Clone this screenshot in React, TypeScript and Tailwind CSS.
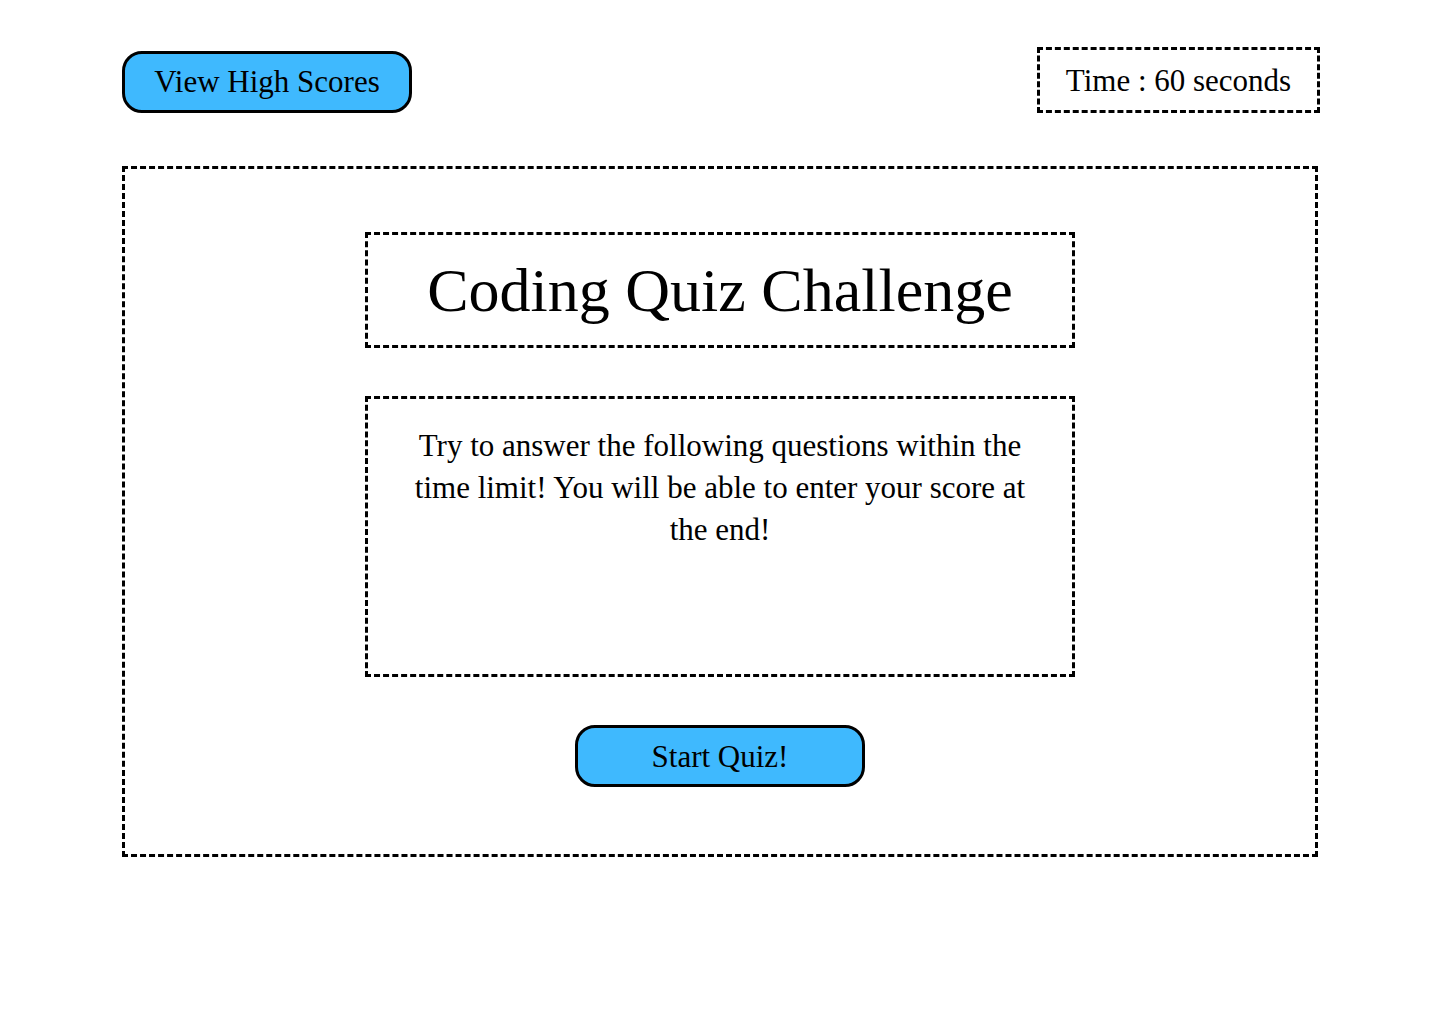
import React from "react";

export default function App() {
  return (
    <div className="min-h-[1024px] w-[1440px] bg-white text-black" style={{ fontFamily: '"Liberation Serif", "DejaVu Serif", serif' }}>
      <div className="ml-[122px] w-[1196px]">
        <header className="flex items-center justify-between pt-[47px]">
          <button className="mt-[3px] h-[62px] w-[290px] rounded-[20px] border-[3px] border-black bg-[#3fb9fe] text-[31px] leading-none">
            View High Scores
          </button>
          <div className="-mr-[2px] flex h-[66px] w-[283px] items-center justify-center border-[3px] border-dashed border-black text-[31px] leading-none">
            Time : 60 seconds
          </div>
        </header>
        <main className="mt-[53px] flex h-[691px] flex-col items-center border-[3px] border-dashed border-black pt-[63px]">
          <div className="flex h-[116px] w-[710px] items-center justify-center border-[3px] border-dashed border-black">
            <h1 className="text-[62px] leading-none">Coding Quiz Challenge</h1>
          </div>
          <div className="mt-[48px] h-[281px] w-[710px] border-[3px] border-dashed border-black px-[10px] pt-[26px]">
            <p className="text-center text-[31px] leading-[42px]">
              Try to answer the following questions within the
              <br />
              time limit! You will be able to enter your score at
              <br />
              the end!
            </p>
          </div>
          <button className="mt-[48px] h-[62px] w-[290px] rounded-[20px] border-[3px] border-black bg-[#3fb9fe] text-[31px] leading-none">
            Start Quiz!
          </button>
        </main>
      </div>
    </div>
  );
}
